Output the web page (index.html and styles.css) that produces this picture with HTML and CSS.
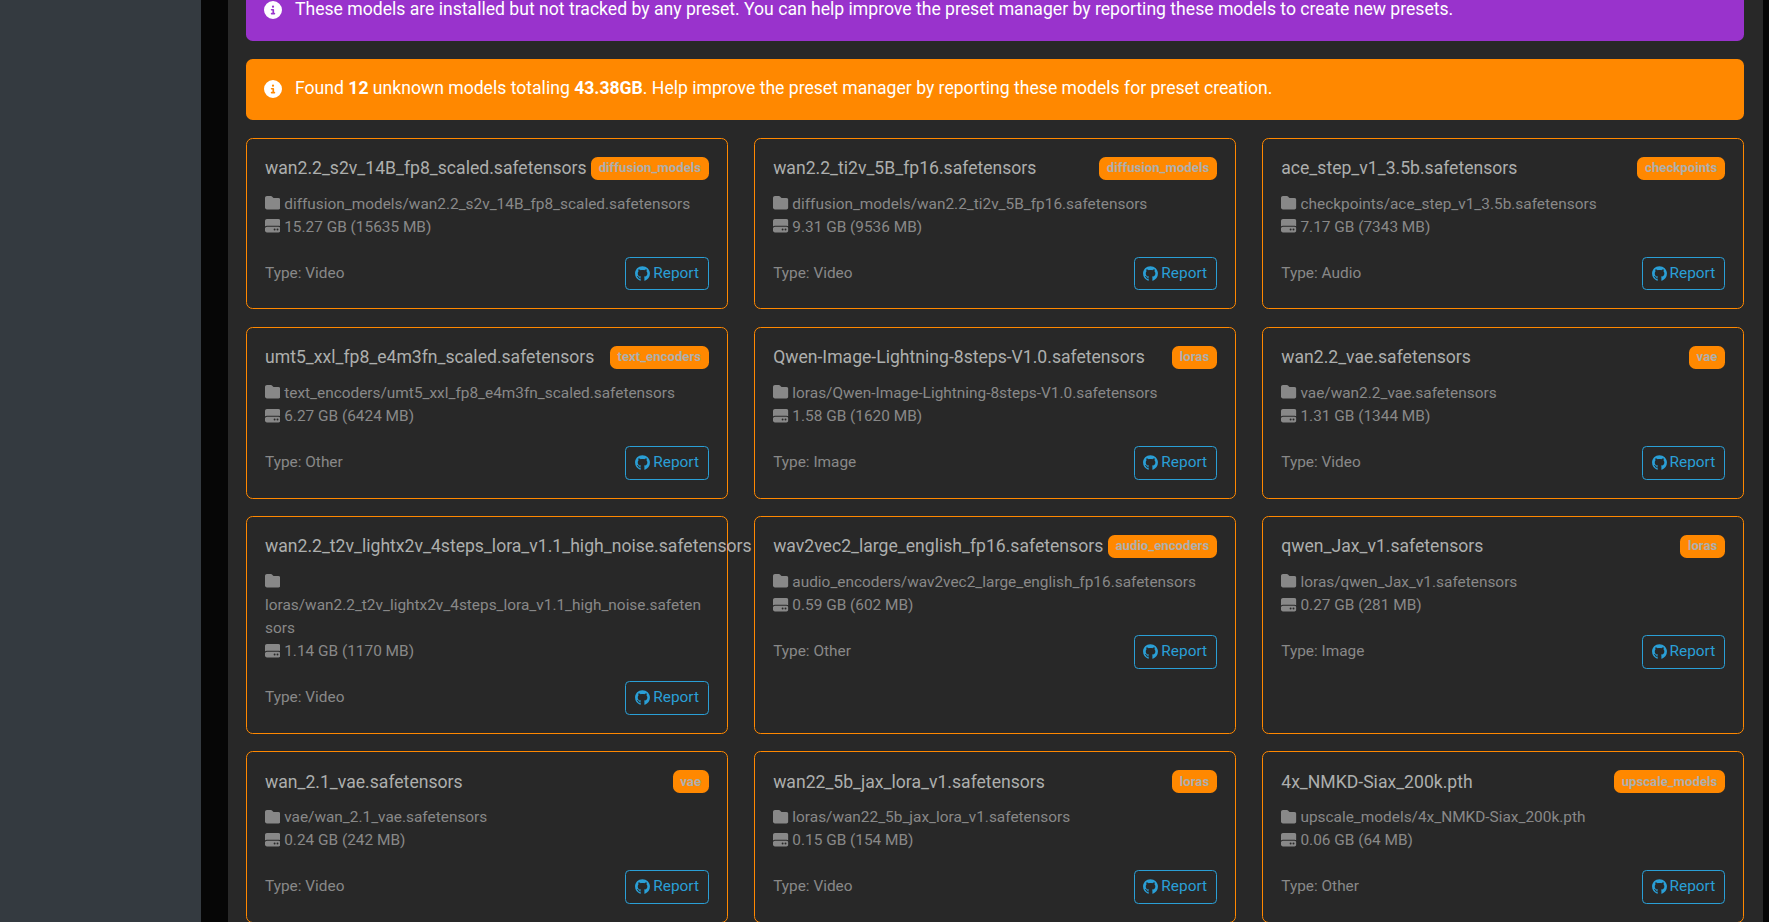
FILE: index.html
```html
<!DOCTYPE html>
<html>
  <head>
    <title>Model Manager</title>
    <link rel="stylesheet" href="styles.css">
  </head>
  <body>
    <svg class="defs" xmlns="http://www.w3.org/2000/svg">
      <symbol id="i-info" viewBox="0 0 512 512"><path d="M256 512A256 256 0 1 0 256 0a256 256 0 1 0 0 512zM216 336h24V272H216c-13.3 0-24-10.7-24-24s10.7-24 24-24h48c13.3 0 24 10.7 24 24v88h8c13.3 0 24 10.7 24 24s-10.7 24-24 24H216c-13.3 0-24-10.7-24-24s10.7-24 24-24zm40-208a32 32 0 1 1 0 64 32 32 0 1 1 0-64z"/></symbol>
      <symbol id="i-folder" viewBox="0 0 512 512"><path d="M64 480H448c35.3 0 64-28.7 64-64V160c0-35.3-28.7-64-64-64H288c-10.1 0-19.6-4.7-25.6-12.8L243.2 57.6C231.1 41.5 212.1 32 192 32H64C28.7 32 0 60.7 0 96V416c0 35.3 28.7 64 64 64z"/></symbol>
      <symbol id="i-hdd" viewBox="0 0 512 512"><path d="M0 96C0 60.7 28.7 32 64 32H448c35.3 0 64 28.7 64 64V280.4c-17-15.2-39.4-24.4-64-24.4H64c-24.6 0-47 9.2-64 24.4V96zM64 288H448c35.3 0 64 28.7 64 64v64c0 35.3-28.7 64-64 64H64c-35.3 0-64-28.7-64-64V352c0-35.3 28.7-64 64-64zM320 416a32 32 0 1 0 0-64 32 32 0 1 0 0 64zm128-32a32 32 0 1 0 -64 0 32 32 0 1 0 64 0z"/></symbol>
      <symbol id="i-github" viewBox="0 0 496 512"><path d="M165.9 397.4c0 2-2.3 3.6-5.2 3.6-3.3 0-5.6-1.6-5.6-3.6 0-2 2.3-3.6 5.2-3.6 3-.3 5.6 1.3 5.6 3.6zm-31.1-4.5c-.7 2 1.3 4.3 4.3 4.9 2.6 1 5.6 0 6.2-2s-1.3-4.3-4.3-5.2c-2.6-.7-5.5.3-6.2 2.3zm44.2-1.7c-2.9.7-4.9 2.6-4.6 4.9.3 2 2.9 3.3 5.9 2.6 2.9-.7 4.9-2.6 4.6-4.6-.3-1.9-3-3.2-5.9-2.9zM244.8 8C106.1 8 0 113.3 0 252c0 110.9 69.8 205.8 169.5 239.2 12.8 2.3 17.3-5.6 17.3-12.1 0-6.2-.3-40.4-.3-61.4 0 0-70 15-84.7-29.8 0 0-11.4-29.1-27.8-36.6 0 0-22.9-15.7 1.6-15.4 0 0 24.9 2 38.6 25.8 21.9 38.6 58.6 27.5 72.9 20.9 2.3-16 8.8-27.1 16-33.7-55.9-6.2-112.3-14.3-112.3-110.5 0-27.5 7.6-41.3 23.6-58.9-2.6-6.5-11.1-33.3 2.6-67.9 20.9-6.5 69 27 69 27 20-5.6 41.5-8.5 62.8-8.5s42.8 2.9 62.8 8.5c0 0 48.1-33.6 69-27 13.7 34.7 5.2 61.4 2.6 67.9 16 17.7 25.8 31.5 25.8 58.9 0 96.5-58.9 104.2-114.8 110.5 9.2 7.9 17 22.9 17 46.4 0 33.7-.3 75.4-.3 83.6 0 6.5 4.6 14.4 17.3 12.1C428.2 457.8 496 362.9 496 252 496 113.3 383.5 8 244.8 8z"/></symbol>
    </svg>

    <div class="layout">
      <aside class="sidebar"></aside>
      <main class="content">
        <div class="alert alert-info">
          <svg class="alert-icon"><use href="#i-info"/></svg>
          <span>These models are installed but not tracked by any preset. You can help improve the preset manager by reporting these models to create new presets.</span>
        </div>
        <div class="alert alert-warning">
          <svg class="alert-icon"><use href="#i-info"/></svg>
          <span>Found <b>12</b> unknown models totaling <b>43.38GB</b>. Help improve the preset manager by reporting these models for preset creation.</span>
        </div>

        <div class="cards">
          <div class="card">
            <div class="card-head"><span class="card-title">wan2.2_s2v_14B_fp8_scaled.safetensors</span><span class="badge">diffusion_models</span></div>
            <div class="card-line"><svg class="icon"><use href="#i-folder"/></svg> diffusion_models/wan2.2_s2v_14B_fp8_scaled.safetensors</div>
            <div class="card-line"><svg class="icon"><use href="#i-hdd"/></svg> 15.27 GB (15635 MB)</div>
            <div class="card-foot"><span class="type">Type: Video</span><a class="btn-report"><svg class="gh"><use href="#i-github"/></svg> Report</a></div>
          </div>
          <div class="card">
            <div class="card-head"><span class="card-title">wan2.2_ti2v_5B_fp16.safetensors</span><span class="badge">diffusion_models</span></div>
            <div class="card-line"><svg class="icon"><use href="#i-folder"/></svg> diffusion_models/wan2.2_ti2v_5B_fp16.safetensors</div>
            <div class="card-line"><svg class="icon"><use href="#i-hdd"/></svg> 9.31 GB (9536 MB)</div>
            <div class="card-foot"><span class="type">Type: Video</span><a class="btn-report"><svg class="gh"><use href="#i-github"/></svg> Report</a></div>
          </div>
          <div class="card">
            <div class="card-head"><span class="card-title">ace_step_v1_3.5b.safetensors</span><span class="badge">checkpoints</span></div>
            <div class="card-line"><svg class="icon"><use href="#i-folder"/></svg> checkpoints/ace_step_v1_3.5b.safetensors</div>
            <div class="card-line"><svg class="icon"><use href="#i-hdd"/></svg> 7.17 GB (7343 MB)</div>
            <div class="card-foot"><span class="type">Type: Audio</span><a class="btn-report"><svg class="gh"><use href="#i-github"/></svg> Report</a></div>
          </div>

          <div class="card">
            <div class="card-head"><span class="card-title">umt5_xxl_fp8_e4m3fn_scaled.safetensors</span><span class="badge">text_encoders</span></div>
            <div class="card-line"><svg class="icon"><use href="#i-folder"/></svg> text_encoders/umt5_xxl_fp8_e4m3fn_scaled.safetensors</div>
            <div class="card-line"><svg class="icon"><use href="#i-hdd"/></svg> 6.27 GB (6424 MB)</div>
            <div class="card-foot"><span class="type">Type: Other</span><a class="btn-report"><svg class="gh"><use href="#i-github"/></svg> Report</a></div>
          </div>
          <div class="card">
            <div class="card-head"><span class="card-title">Qwen-Image-Lightning-8steps-V1.0.safetensors</span><span class="badge">loras</span></div>
            <div class="card-line"><svg class="icon"><use href="#i-folder"/></svg> loras/Qwen-Image-Lightning-8steps-V1.0.safetensors</div>
            <div class="card-line"><svg class="icon"><use href="#i-hdd"/></svg> 1.58 GB (1620 MB)</div>
            <div class="card-foot"><span class="type">Type: Image</span><a class="btn-report"><svg class="gh"><use href="#i-github"/></svg> Report</a></div>
          </div>
          <div class="card">
            <div class="card-head"><span class="card-title">wan2.2_vae.safetensors</span><span class="badge">vae</span></div>
            <div class="card-line"><svg class="icon"><use href="#i-folder"/></svg> vae/wan2.2_vae.safetensors</div>
            <div class="card-line"><svg class="icon"><use href="#i-hdd"/></svg> 1.31 GB (1344 MB)</div>
            <div class="card-foot"><span class="type">Type: Video</span><a class="btn-report"><svg class="gh"><use href="#i-github"/></svg> Report</a></div>
          </div>

          <div class="card">
            <div class="card-head"><span class="card-title">wan2.2_t2v_lightx2v_4steps_lora_v1.1_high_noise.safetensors</span><span class="badge">loras</span></div>
            <div class="card-line"><svg class="icon"><use href="#i-folder"/></svg> loras/wan2.2_t2v_lightx2v_4steps_lora_v1.1_high_noise.safetensors</div>
            <div class="card-line"><svg class="icon"><use href="#i-hdd"/></svg> 1.14 GB (1170 MB)</div>
            <div class="card-foot"><span class="type">Type: Video</span><a class="btn-report"><svg class="gh"><use href="#i-github"/></svg> Report</a></div>
          </div>
          <div class="card">
            <div class="card-head"><span class="card-title">wav2vec2_large_english_fp16.safetensors</span><span class="badge">audio_encoders</span></div>
            <div class="card-line"><svg class="icon"><use href="#i-folder"/></svg> audio_encoders/wav2vec2_large_english_fp16.safetensors</div>
            <div class="card-line"><svg class="icon"><use href="#i-hdd"/></svg> 0.59 GB (602 MB)</div>
            <div class="card-foot"><span class="type">Type: Other</span><a class="btn-report"><svg class="gh"><use href="#i-github"/></svg> Report</a></div>
          </div>
          <div class="card">
            <div class="card-head"><span class="card-title">qwen_Jax_v1.safetensors</span><span class="badge">loras</span></div>
            <div class="card-line"><svg class="icon"><use href="#i-folder"/></svg> loras/qwen_Jax_v1.safetensors</div>
            <div class="card-line"><svg class="icon"><use href="#i-hdd"/></svg> 0.27 GB (281 MB)</div>
            <div class="card-foot"><span class="type">Type: Image</span><a class="btn-report"><svg class="gh"><use href="#i-github"/></svg> Report</a></div>
          </div>

          <div class="card">
            <div class="card-head"><span class="card-title">wan_2.1_vae.safetensors</span><span class="badge">vae</span></div>
            <div class="card-line"><svg class="icon"><use href="#i-folder"/></svg> vae/wan_2.1_vae.safetensors</div>
            <div class="card-line"><svg class="icon"><use href="#i-hdd"/></svg> 0.24 GB (242 MB)</div>
            <div class="card-foot"><span class="type">Type: Video</span><a class="btn-report"><svg class="gh"><use href="#i-github"/></svg> Report</a></div>
          </div>
          <div class="card">
            <div class="card-head"><span class="card-title">wan22_5b_jax_lora_v1.safetensors</span><span class="badge">loras</span></div>
            <div class="card-line"><svg class="icon"><use href="#i-folder"/></svg> loras/wan22_5b_jax_lora_v1.safetensors</div>
            <div class="card-line"><svg class="icon"><use href="#i-hdd"/></svg> 0.15 GB (154 MB)</div>
            <div class="card-foot"><span class="type">Type: Video</span><a class="btn-report"><svg class="gh"><use href="#i-github"/></svg> Report</a></div>
          </div>
          <div class="card">
            <div class="card-head"><span class="card-title">4x_NMKD-Siax_200k.pth</span><span class="badge">upscale_models</span></div>
            <div class="card-line"><svg class="icon"><use href="#i-folder"/></svg> upscale_models/4x_NMKD-Siax_200k.pth</div>
            <div class="card-line"><svg class="icon"><use href="#i-hdd"/></svg> 0.06 GB (64 MB)</div>
            <div class="card-foot"><span class="type">Type: Other</span><a class="btn-report"><svg class="gh"><use href="#i-github"/></svg> Report</a></div>
          </div>
        </div>
      </main>
    </div>
  </body>
</html>
```

FILE: styles.css
```css
html, body {
  margin: 0;
  height: 100%;
  overflow: hidden;
}

body {
  background: #060606;
  color: #adafae;
  font-family: Roboto, "Liberation Sans", sans-serif;
  font-size: 15.4px;
  line-height: 23.1px;
}

.defs {
  display: none;
}

.layout {
  display: flex;
  height: 100%;
}

.sidebar {
  flex: 0 0 201px;
  background: #343a40;
}

.content {
  flex: 1;
  min-width: 0;
  margin: 0 6px 0 27px;
  padding: 0 19px 0 18px;
  background: #282828;
}

/* page is scrolled a bit, so the first alert starts above the fold */
.alert {
  display: flex;
  align-items: center;
  gap: 13px;
  height: 61px;
  box-sizing: border-box;
  margin-bottom: 18px;
  padding: 0 18px 1px;
  border-radius: 6.6px;
  color: #fff;
  font-size: 17.6px;
}

.alert-info {
  margin-top: -20px;
  background: #9933cc;
}

.alert-warning {
  background: #ff8800;
}

.alert-icon {
  width: 18px;
  height: 18px;
  flex: none;
  fill: #fff;
}

.cards {
  display: grid;
  grid-template-columns: repeat(3, 1fr);
  gap: 17.6px 26.4px;
}

.card {
  position: relative;
  min-width: 0;
  padding: 17.6px 18px 18px;
  border: 1px solid #ff8800;
  border-radius: 6.6px;
  background: #282828;
  overflow-wrap: break-word;
}

.card-head {
  display: flex;
  justify-content: space-between;
  align-items: center;
  gap: 3px;
  margin-bottom: 13px;
}

.card-title {
  font-size: 17.6px;
  line-height: 22px;
  white-space: nowrap;
}

.badge {
  flex: none;
  padding: 4.6px 7.7px;
  border-radius: 6.6px;
  background: #ff8800;
  font-size: 13.2px;
  line-height: 14px;
  font-weight: 700;
}

.card-line {
  color: #888;
}

.icon {
  width: 15.4px;
  height: 15.4px;
  vertical-align: -2px;
  fill: #888;
}

.card-foot {
  display: flex;
  justify-content: space-between;
  align-items: center;
  margin-top: 17.6px;
}

.type {
  color: #888;
}

.btn-report {
  display: flex;
  align-items: center;
  gap: 3px;
  height: 33.9px;
  box-sizing: border-box;
  padding: 0 8.8px;
  border: 1px solid #2a9fd6;
  border-radius: 4.4px;
  color: #2a9fd6;
  font-size: 15.4px;
}

.gh {
  width: 15px;
  height: 15.4px;
  fill: #2a9fd6;
}
```
